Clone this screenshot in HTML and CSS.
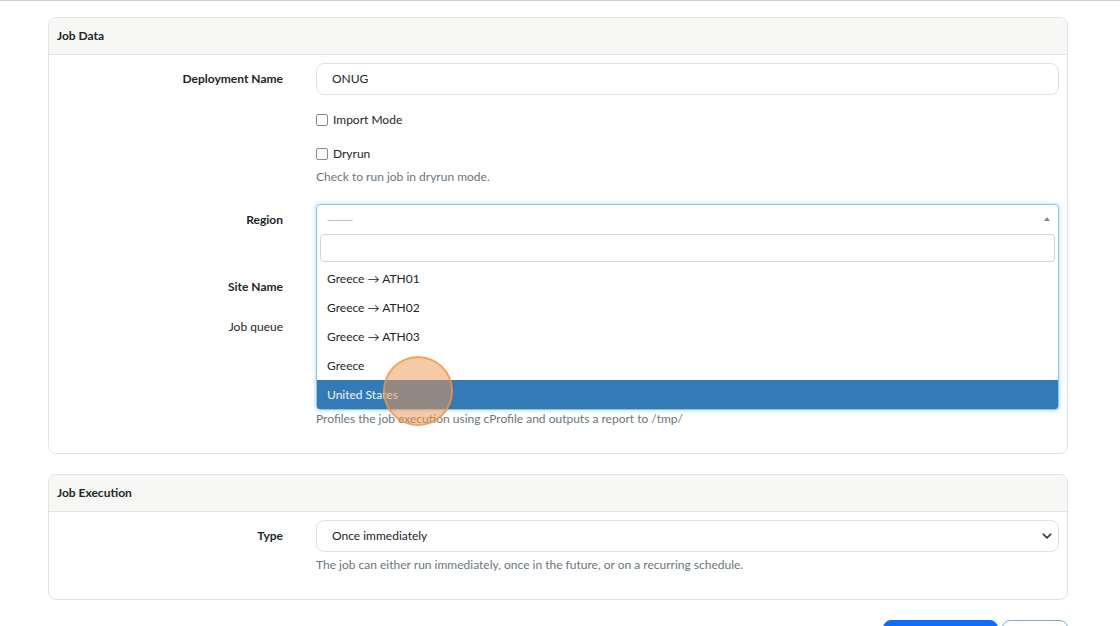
FILE: index.html
```html
<!DOCTYPE html>
<html lang="en">
<head>
    <meta charset="UTF-8">
    <meta name="viewport" content="width=device-width, initial-scale=1.0">
    <title>Job - ONUG</title>
    <link rel="stylesheet" href="styles.css">
</head>
<body>
    <div class="page">
        <!-- Job Data -->
        <div class="card">
            <div class="card-header">Job Data</div>
            <div class="card-body">
                <div class="form-row">
                    <label class="form-label">Deployment Name</label>
                    <div class="form-input">ONUG</div>
                </div>

                <div class="form-row check-row">
                    <span></span>
                    <label class="form-check"><span class="checkbox"></span>Import Mode</label>
                </div>

                <div class="form-row check-row dryrun">
                    <span></span>
                    <div>
                        <label class="form-check"><span class="checkbox"></span>Dryrun</label>
                        <div class="help-text">Check to run job in dryrun mode.</div>
                    </div>
                </div>

                <div class="form-row region-row">
                    <label class="form-label">Region</label>
                    <div class="select-wrap">
                        <div class="form-input"></div>

                        <!-- open select2 dropdown -->
                        <div class="select-open">
                            <div class="select-head">
                                <span class="placeholder">---------</span>
                                <span class="caret-up"></span>
                            </div>
                            <div class="select-search"><div class="search-box"></div></div>
                            <ul class="select-options">
                                <li>Greece → ATH01</li>
                                <li>Greece → ATH02</li>
                                <li>Greece → ATH03</li>
                                <li>Greece</li>
                                <li class="active">United States</li>
                            </ul>
                        </div>
                    </div>
                </div>

                <div class="form-row site-row">
                    <label class="form-label">Site Name</label>
                    <div class="form-input"></div>
                </div>

                <div class="form-row">
                    <label class="form-label normal">Job queue</label>
                    <div class="form-input"></div>
                </div>

                <div class="form-row profile-row">
                    <span></span>
                    <div>
                        <label class="form-check"><span class="checkbox"></span>Profile</label>
                        <div class="help-text">Profiles the job execution using cProfile and outputs a report to /tmp/</div>
                    </div>
                </div>
            </div>
        </div>

        <!-- Job Execution -->
        <div class="card">
            <div class="card-header">Job Execution</div>
            <div class="card-body">
                <div class="form-row last">
                    <label class="form-label">Type</label>
                    <div>
                        <div class="form-input form-select">
                            Once immediately
                            <svg class="chevron" width="10" height="10" viewBox="0 0 16 16"><path d="M2 5l6 6 6-6" fill="none" stroke="#343a40" stroke-width="2.4" stroke-linecap="round" stroke-linejoin="round"/></svg>
                        </div>
                        <div class="help-text">The job can either run immediately, once in the future, or on a recurring schedule.</div>
                    </div>
                </div>
            </div>
        </div>

        <div class="actions">
            <button class="btn btn-primary">Run Job Now</button>
            <button class="btn btn-outline">Cancel</button>
        </div>
    </div>

    <div class="click-marker"></div>
</body>
</html>
```

FILE: styles.css
```css
* {
    margin: 0;
    padding: 0;
    box-sizing: border-box;
}

body {
    font-family: "Lato", "Noto Sans", sans-serif;
    font-size: 12px;
    color: #212529;
    background: white;
    border-top: 1px solid #cfcfcf;
    overflow: hidden;
    height: 626px;
}

.page {
    width: 1020px;
    margin-left: 48px;
    padding-top: 16px;
}

.card {
    border: 1px solid #e3e3e1;
    border-radius: 8px;
    margin-bottom: 20px;
}

.card-header {
    height: 37px;
    line-height: 36px;
    padding: 0 8px;
    background: #f7f8f6;
    border-bottom: 1px solid #e3e3e1;
    border-radius: 8px 8px 0 0;
    font-weight: 700;
}

.card-body {
    padding: 8px 8px 25px;
}

.form-row {
    display: grid;
    grid-template-columns: 226px 1fr;
    column-gap: 33px;
    margin-bottom: 16px;
}

.form-row.last {
    margin-bottom: 0;
}

.form-row.last .help-text {
    margin-top: 4px;
}

.form-label {
    text-align: right;
    font-weight: 700;
    line-height: 32px;
}

.form-label.normal {
    font-weight: 400;
}

.form-input {
    height: 32px;
    line-height: 30px;
    border: 1px solid #dee2e6;
    border-radius: 8px;
    padding: 0 15px;
    background: white;
}

.form-select {
    position: relative;
}

.chevron {
    position: absolute;
    right: 6px;
    top: 10px;
}

.check-row {
    margin-bottom: 17px;
}

.form-check {
    display: flex;
    align-items: center;
    height: 17px;
}

.checkbox {
    width: 12px;
    height: 12px;
    border: 1px solid #8a8a8a;
    border-radius: 2px;
    margin-right: 5px;
    background: white;
}

.help-text {
    color: #6c757d;
    margin-top: 6px;
    line-height: 18px;
}

.dryrun {
    margin-bottom: 18px;
}

.region-row {
    margin-bottom: 35px;
}

.site-row {
    margin-bottom: 8px;
}

.profile-row {
    margin-top: 50px;
    margin-bottom: 0;
}

.profile-row .help-text {
    margin-top: 0;
}

.select-wrap {
    position: relative;
}

/* open dropdown over the form */
.select-open {
    position: absolute;
    top: 0;
    left: 0;
    right: 0;
    z-index: 5;
    background: white;
    border: 1px solid #8ec5f0;
    border-radius: 4px;
    box-shadow: 0 0 4px rgba(102, 175, 233, 0.55);
}

.select-head {
    height: 28px;
    display: flex;
    align-items: center;
    justify-content: space-between;
    padding: 0 8px 0 10px;
}

.placeholder {
    color: #9a9a9a;
    font-size: 9px;
    letter-spacing: -0.5px;
}

.caret-up {
    width: 0;
    height: 0;
    border-left: 3.5px solid transparent;
    border-right: 3.5px solid transparent;
    border-bottom: 4px solid #8a8a8a;
}

.select-search {
    padding: 1px 3px 2px;
}

.search-box {
    height: 28px;
    border: 1px solid #d4d4d4;
    border-radius: 4px;
}

.select-options {
    list-style: none;
}

.select-options li {
    height: 29px;
    line-height: 29px;
    padding: 0 10px;
}

.select-options li.active {
    background: #337ab7;
    color: #f0f4f8;
    border-radius: 0 0 3px 3px;
}

.actions {
    display: flex;
    justify-content: flex-end;
    gap: 4px;
}

.btn {
    font-family: inherit;
    font-size: 12px;
    height: 32px;
    border-radius: 8px;
    padding: 0 14px;
}

.btn-primary {
    width: 115px;
    background: #0d6efd;
    border: 1px solid #0d6efd;
    color: white;
}

.btn-outline {
    width: 66px;
    background: white;
    border: 1px solid #6ea8fe;
    color: #0d6efd;
}

.click-marker {
    position: absolute;
    left: 383px;
    top: 356px;
    width: 70px;
    height: 70px;
    border-radius: 50%;
    background: rgba(240, 150, 80, 0.5);
    border: 2px solid rgba(240, 150, 70, 0.75);
    z-index: 10;
}
```
